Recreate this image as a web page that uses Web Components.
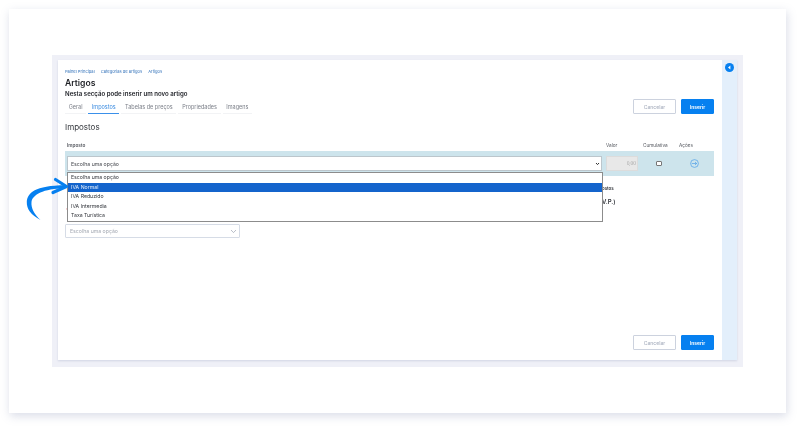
<!DOCTYPE html>
<html lang="pt">
<head>
<meta charset="utf-8">
<title>Artigos</title>
<style>
  html, body { margin: 0; height: 100%; background: #fff; }
  body { font-family: Inter, "Liberation Sans", sans-serif; overflow: hidden; }
</style>
</head>
<body>
<slide-card>
  <app-frame>
    <page-header></page-header>
    <tax-section></tax-section>
    <form-actions slot="footer"></form-actions>
  </app-frame>
</slide-card>

<script>
// base class so each element only has to hand over its template string
class ShadowBase extends HTMLElement {
    constructor() {
        super();
        this.attachShadow({ mode: 'open' });
    }
    connectedCallback() {
        this.shadowRoot.innerHTML = this.template();
    }
}

class SlideCard extends ShadowBase {
    template() {
        return `
        <style>
            :host { display: block; padding: 9px 14px 14px 9px; }
            .card {
                height: 404px; box-sizing: border-box;
                padding: 46px 43px 46px 43px;
                background: #fff;
                box-shadow: 1px 3px 9px rgba(120,130,170,.28);
            }
        </style>
        <div class="card"><slot></slot></div>`;
    }
}

class AppFrame extends ShadowBase {
    template() {
        return `
        <style>
            :host { display: block; height: 312px; box-sizing: border-box; padding: 5px 6px 7px 6px; background: #eff0f7; }
            .wrap { display: flex; height: 100%; box-shadow: 0 1px 2px rgba(120,130,170,.25); }
            /* the reference is a downscaled capture, everything in it is a bit soft */
            main { flex: 1; min-width: 0; background: #fff; position: relative; padding: 0 8px 10px 7px; display: flex; flex-direction: column; filter: blur(.25px); }
            .grow { flex: 1; }
            aside { width: 15px; background: #e3effb; display: flex; justify-content: center; padding-top: 3px; box-sizing: border-box; }
            aside svg { display: block; }
        </style>
        <div class="wrap">
            <main>
                <slot></slot>
                <div class="grow"></div>
                <slot name="footer"></slot>
            </main>
            <aside>
                <svg width="9" height="9" viewBox="0 0 9 9"><circle cx="4.5" cy="4.5" r="4.5" fill="#0680f0"/><path d="M5.4 2.5 3 4.5l2.4 2z" fill="#fff"/></svg>
            </aside>
        </div>`;
    }
}

class FormActions extends ShadowBase {
    template() {
        return `
        <style>
            :host { display: flex; justify-content: flex-end; gap: 5px; }
            button {
                height: 15px; box-sizing: border-box; padding: 0; border-radius: 1px;
                font: 500 5px Inter, "Liberation Sans", sans-serif;
            }
            .cancel { width: 43px; background: #fff; border: 1px solid #ccd2de; color: #a9b0bf; }
            .ok { width: 33px; background: #0680f0; border: 1px solid #0680f0; color: #fff; font-weight: 600; }
        </style>
        <button class="cancel">Cancelar</button>
        <button class="ok">Inserir</button>`;
    }
}

class PageHeader extends ShadowBase {
    template() {
        return `
        <style>
            :host { display: flex; align-items: flex-end; justify-content: space-between; padding-top: 9px; }
            .crumbs { display: flex; gap: 6px; font-size: 4.1px; line-height: 5px; color: #2f6fb8; }
            h1 { margin: 4px 0 0; font-size: 8.6px; line-height: 11px; font-weight: 600; color: #1d1f24; }
            p { margin: 1px 0 0; font-size: 6.1px; line-height: 8px; font-weight: 600; color: #23252b; }
            nav { display: flex; gap: 2px; margin-top: 4px; }
            nav span { padding: 0 3.7px 0; height: 11px; line-height: 10px; font-size: 5.5px; color: #7b7f88; border-bottom: 1px solid #f2f3f5; }
            nav .on { color: #3a8be0; border-bottom: 1px solid #3a90ea; }
        </style>
        <div>
            <div class="crumbs"><span>Painel Principal</span><span>Categorias de artigos</span><span>Artigos</span></div>
            <h1>Artigos</h1>
            <p>Nesta secção pode inserir um novo artigo</p>
            <nav>
                <span>Geral</span><span class="on">Impostos</span><span>Tabelas de preços</span><span>Propriedades</span><span>Imagens</span>
            </nav>
        </div>
        <form-actions></form-actions>`;
    }
}

class TaxSection extends ShadowBase {
    template() {
        return `
        <style>
            :host { display: block; position: relative; }
            h2 { margin: 8px 0 0; font-size: 8px; line-height: 11px; font-weight: 400; color: #33363c; }
            .cols, .row { display: grid; grid-template-columns: 539px 37px 36px 1fr; }
            .cols { margin-top: 7px; height: 11px; line-height: 10px; font-size: 4.7px; color: #55585f; padding-left: 2px; }
            .cols b { font-weight: 600; }
            .row { height: 25px; background: #cde4ec; padding: 5px 0 5px 2px; box-sizing: border-box; align-items: center; }
            .fake { height: 15px; width: 535px; box-sizing: border-box; background: #fff; border: 1px solid #bcc6cc; padding: 0 1px 0 3px; display: flex; align-items: center; justify-content: space-between; font-size: 5.2px; color: #44474d; }
            .val { width: 32px; height: 15px; box-sizing: border-box; background: #e8e8e8; border: 1px solid #dcdcdc; font-size: 4.4px; color: #a0a0a0; display: flex; align-items: center; justify-content: flex-end; padding-right: 1px; }
            .chk { width: 4px; height: 3px; border: 1px solid #777; border-radius: 1px; background: #fff; justify-self: center; margin-right: 5px; }
            .act { display: flex; justify-content: center; padding-right: 4px; }
            .under { position: relative; height: 48px; }
            .peek { position: absolute; left: 537px; font-weight: 600; color: #33363c; }
            .note { margin: 0; font-size: 4.4px; color: #e05050; position: absolute; left: 1px; top: 32px; }
            .pick { width: 175px; height: 14px; box-sizing: border-box; border: 1px solid #d6dce6; border-radius: 1px; background: #fff; padding: 0 2px 0 4px; display: flex; align-items: center; justify-content: space-between; font-size: 5.2px; color: #a3a8b2; }
        </style>
        <h2>Impostos</h2>
        <div class="cols"><b>Imposto</b><span>Valor</span><span>Cumulativa</span><span>Ações</span></div>
        <div class="row">
            <div class="fake">Escolha uma opção
                <svg width="5" height="4" viewBox="0 0 5 4"><path d="M1 1l1.500 1.600L4 1" fill="none" stroke="#333" stroke-width="1"/></svg>
            </div>
            <div class="val">0,00</div>
            <div class="chk"></div>
            <div class="act">
                <svg width="9" height="9" viewBox="0 0 9 9" fill="none" stroke="#4f9fe8" stroke-width=".7"><circle cx="4.5" cy="4.5" r="3.9"/><path d="M1.8 4.5h5M5 3l1.6 1.5L5 6"/></svg>
            </div>
        </div>
        <div class="under">
            <span class="peek" style="top:10px;font-size:4.4px">ostos</span>
            <span class="peek" style="top:22px;font-size:6px">V.P.)</span>
            <p class="note">*</p>
        </div>
        <div class="pick">Escolha uma opção
            <svg width="7" height="5" viewBox="0 0 7 5"><path d="M1 1l2.500 2.600L6 1" fill="none" stroke="#9aa2b0" stroke-width=".7"/></svg>
        </div>
        <option-menu></option-menu>
        <swoop-arrow></swoop-arrow>`;
    }
}

class OptionMenu extends ShadowBase {
    template() {
        const items = ['Escolha uma opção', 'IVA Normal', 'IVA Reduzido', 'IVA Intermedia', 'Taxa Turística'];
        return `
        <style>
            :host { position: absolute; left: 2px; top: 58px; width: 536px; height: 50px; box-sizing: border-box; background: #fff; border: 1px solid #8c8c8c; display: block; }
            div { height: 9.6px; line-height: 9.6px; padding-left: 3px; font-size: 5.2px; color: #33363c; }
            .sel { background: #1464cc; color: #e8f0fa; }
        </style>
        ${items.map((t, i) => `<div class="${i === 1 ? 'sel' : ''}">${t}</div>`).join('')}`;
    }
}

// big blue hand-drawn arrow that points at the selected option
class SwoopArrow extends ShadowBase {
    template() {
        return `
        <style>
            :host { position: absolute; left: -45px; top: 56px; display: block; width: 50px; height: 55px; }
            svg { display: block; }
        </style>
        <svg width="50" height="55" viewBox="0 0 50 55">
            <path d="M20.500 50C11 45 6.500 39 6.800 32 7.200 23 15 15.300 45 15.200L45 18.300C23 18.600 12.500 25 11.500 32 10.800 38 14.500 44.500 20.500 50Z" fill="#0680f0"/>
            <path d="M35.500 9.500 46.500 16.500 33 22.500" fill="none" stroke="#0680f0" stroke-width="3.200" stroke-linecap="round" stroke-linejoin="round"/>
        </svg>`;
    }
}

customElements.define('slide-card', SlideCard);
customElements.define('app-frame', AppFrame);
customElements.define('form-actions', FormActions);
customElements.define('page-header', PageHeader);
customElements.define('tax-section', TaxSection);
customElements.define('option-menu', OptionMenu);
customElements.define('swoop-arrow', SwoopArrow);
</script>
</body>
</html>
